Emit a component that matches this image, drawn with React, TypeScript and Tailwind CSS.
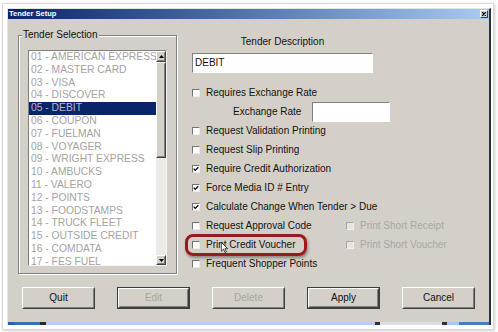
const tenders = [
  '01 - AMERICAN EXPRESS',
  '02 - MASTER CARD',
  '03 - VISA',
  '04 - DISCOVER',
  '05 - DEBIT',
  '06 - COUPON',
  '07 - FUELMAN',
  '08 - VOYAGER',
  '09 - WRIGHT EXPRESS',
  '10 - AMBUCKS',
  '11 - VALERO',
  '12 - POINTS',
  '13 - FOODSTAMPS',
  '14 - TRUCK FLEET',
  '15 - OUTSIDE CREDIT',
  '16 - COMDATA',
  '17 - FES FUEL',
];

function Box({ checked, disabled }: { checked?: boolean; disabled?: boolean }) {
  return (
    <span
      className={
        disabled
          ? 'flex h-[8px] w-[8px] shrink-0 items-center justify-center border border-t-[#aaa7a1] border-l-[#aaa7a1] border-b-[#f2f1ee] border-r-[#f2f1ee] bg-[#e6e4e0]'
          : 'flex h-[8px] w-[8px] shrink-0 items-center justify-center border border-t-[#767676] border-l-[#767676] border-b-[#ebebeb] border-r-[#ebebeb] bg-white'
      }
    >
      {checked && (
        <svg width="6" height="6" viewBox="0 0 7 6">
          <path d="M0.8 2.6 L2.6 4.6 L6.2 0.9" stroke="#000" strokeWidth="1.5" fill="none" />
        </svg>
      )}
    </span>
  );
}

function Check({ label, checked, disabled }: { label: string; checked?: boolean; disabled?: boolean }) {
  return (
    <div className="flex h-[19px] items-center gap-[6px]">
      <Box checked={checked} disabled={disabled} />
      <span className={disabled ? 'whitespace-nowrap text-[#aaa7a2]' : 'whitespace-nowrap text-[#111]'}>{label}</span>
    </div>
  );
}

function Raised({ className, children }: { className: string; children?: React.ReactNode }) {
  return (
    <div className={`border border-t-white border-l-white border-b-[#404040] border-r-[#404040] bg-[#d4d0c8] ${className}`}>
      <div className="flex h-full w-full items-center justify-center border border-t-[#d4d0c8] border-l-[#d4d0c8] border-b-[#808080] border-r-[#808080]">
        {children}
      </div>
    </div>
  );
}

function Btn({ label, disabled, framed }: { label: string; disabled?: boolean; framed?: boolean }) {
  const text = (
    <span className={disabled ? 'text-[#a8a5a0]' : 'text-[#111]'}>{label}</span>
  );
  if (framed) {
    return (
      <div className="h-[22px] w-[73px] border border-[#3c3c3c]">
        <Raised className="h-full w-full">{text}</Raised>
      </div>
    );
  }
  return <Raised className="h-[22px] w-[73px]">{text}</Raised>;
}

function Arrow({ up }: { up?: boolean }) {
  return (
    <svg width="5" height="3" viewBox="0 0 5 3">
      <path d={up ? 'M2.5 0 L5 3 L0 3 Z' : 'M0 0 L5 0 L2.5 3 Z'} fill="#000" />
    </svg>
  );
}

function TenderList() {
  return (
    <div className="flex h-[216px] w-[139px] border border-t-[#808080] border-l-[#808080] border-b-[#f4f4f4] border-r-[#f4f4f4] bg-white">
      <div className="flex-1 overflow-hidden">
        {tenders.map((t, i) => (
          <div
            key={t}
            className={
              i === 4
                ? 'h-[12.8px] whitespace-nowrap bg-[#0a246a] pl-[2px] text-[10.3px] leading-[12.8px] text-[#b4b8c8]'
                : 'h-[12.8px] whitespace-nowrap pl-[2px] text-[10.3px] leading-[12.8px] text-[#a3a3a3]'
            }
          >
            {t}
          </div>
        ))}
      </div>
      <div className="flex w-[10px] flex-col">
        <Raised className="h-[11px] w-[10px]">
          <Arrow up />
        </Raised>
        <Raised className="h-[96px] w-[10px]" />
        <div className="flex-1 bg-[#ecebe8]" />
        <Raised className="h-[10px] w-[10px]">
          <Arrow />
        </Raised>
      </div>
    </div>
  );
}

function Window() {
  return (
    <div className="flex w-[484px] flex-col border-t border-l border-t-[#e4e4e4] border-l-[#e4e4e4] border-r-2 border-r-[#2a3242]">
      {/* title bar */}
      <div className="flex h-[10px] items-center justify-between bg-linear-to-r from-[#0a246a] to-[#a8ccf2]">
        <span className="pl-[1px] text-[7.5px] font-bold leading-none text-white">Tender Setup</span>
        <div className="mr-[1px] flex h-[8px] w-[8px] items-center justify-center border border-t-white border-l-white border-b-[#404040] border-r-[#404040] bg-[#d4d0c8]">
          <svg width="4" height="4" viewBox="0 0 4 4">
            <path d="M0 0 L4 4 M4 0 L0 4" stroke="#000" strokeWidth="1.2" />
          </svg>
        </div>
      </div>

      {/* body */}
      <div className="flex h-[303px] flex-col bg-[#d4d0c8] pl-[10px] pt-[16px] text-[10px] leading-[12px] text-[#111]">
        <div className="flex items-start">
          <div className="relative h-[239px] w-[159px] border border-[#808080] pl-[9px] pt-[14px] shadow-[1px_1px_0_#fff,inset_1px_1px_0_#fff]">
            <span className="absolute -top-[7px] left-[3px] bg-[#d4d0c8] px-[1px] leading-[12px]">Tender Selection</span>
            <TenderList />
          </div>

          <div className="ml-[15px] flex flex-col pt-[1px]">
            <div className="w-[181px] text-center leading-[12px]">Tender Description</div>
            <div className="mt-[5px] flex h-[20px] w-[181px] items-center border border-t-[#808080] border-l-[#808080] border-b-white border-r-white bg-white pl-[2px]">
              DEBIT
            </div>
            <div className="mt-[10px] flex flex-col">
              <Check label="Requires Exchange Rate" />
              <div className="flex h-[19px] items-center">
                <span className="ml-[41px]">Exchange Rate</span>
                <div className="ml-[11px] h-[20px] w-[78px] border border-t-[#808080] border-l-[#808080] border-b-white border-r-white bg-white" />
              </div>
              <Check label="Request Validation Printing" />
              <Check label="Request Slip Printing" />
              <Check label="Require Credit Authorization" checked />
              <Check label="Force Media ID # Entry" checked />
              <Check label="Calculate Change When Tender > Due" checked />
              <div className="flex items-center">
                <div className="w-[154px]">
                  <Check label="Request Approval Code" />
                </div>
                <Check label="Print Short Receipt" disabled />
              </div>
              <div className="flex items-center">
                <div className="relative w-[154px]">
                  <Check label="Print Credit Voucher" />
                  <div className="absolute -left-[7px] -top-[1px] h-[22px] w-[122px] rounded-[8px] border-[3px] border-[#9c1a1e] shadow-[1px_2px_3px_rgba(0,0,0,0.35)]" />
                  <svg className="absolute left-[29px] top-[7px]" width="7" height="11" viewBox="0 0 12 19">
                    <path d="M0.5 0.5 L0.5 16 L4.3 12.3 L7 18.3 L9.3 17.3 L6.7 11.5 L11.5 11.5 Z" fill="#fff" stroke="#000" strokeWidth="1.2" />
                  </svg>
                </div>
                <Check label="Print Short Voucher" disabled />
              </div>
              <Check label="Frequent Shopper Points" />
            </div>
          </div>
        </div>

        <div className="ml-[4px] mt-[13px] flex gap-[22px]">
          <Btn label="Quit" />
          <Btn label="Edit" disabled framed />
          <Btn label="Delete" disabled />
          <Btn label="Apply" framed />
          <Btn label="Cancel" />
        </div>
      </div>

      {/* desktop strip below the window */}
      <div className="flex h-[3px]">
        <div className="w-[6px] bg-[#2f5fa8]" />
        <div className="w-[26px] bg-[#3d6fb8]" />
        <div className="w-[6px] bg-[#2a2a2a]" />
        <div className="flex-1 bg-[#b2cff3]" />
        <div className="w-[5px] bg-[#303030]" />
        <div className="w-[62px] bg-[#d6e0ec]" />
        <div className="w-[5px] bg-[#303030]" />
        <div className="w-[12px] bg-[#a9c8ee]" />
        <div className="w-[30px] bg-[#4b7cc0]" />
      </div>
    </div>
  );
}

export default function App() {
  return (
    <div className="h-[332px] w-[498px] overflow-hidden bg-white font-['Liberation_Sans',Arial,sans-serif] text-black">
      <div className="ml-[2px] mt-[3px] h-[327px] w-[492px] border border-[#d8d8d8] pl-[4px] pt-[4px] shadow-[1px_1px_3px_rgba(0,0,0,0.2)]">
        <Window />
      </div>
    </div>
  );
}
